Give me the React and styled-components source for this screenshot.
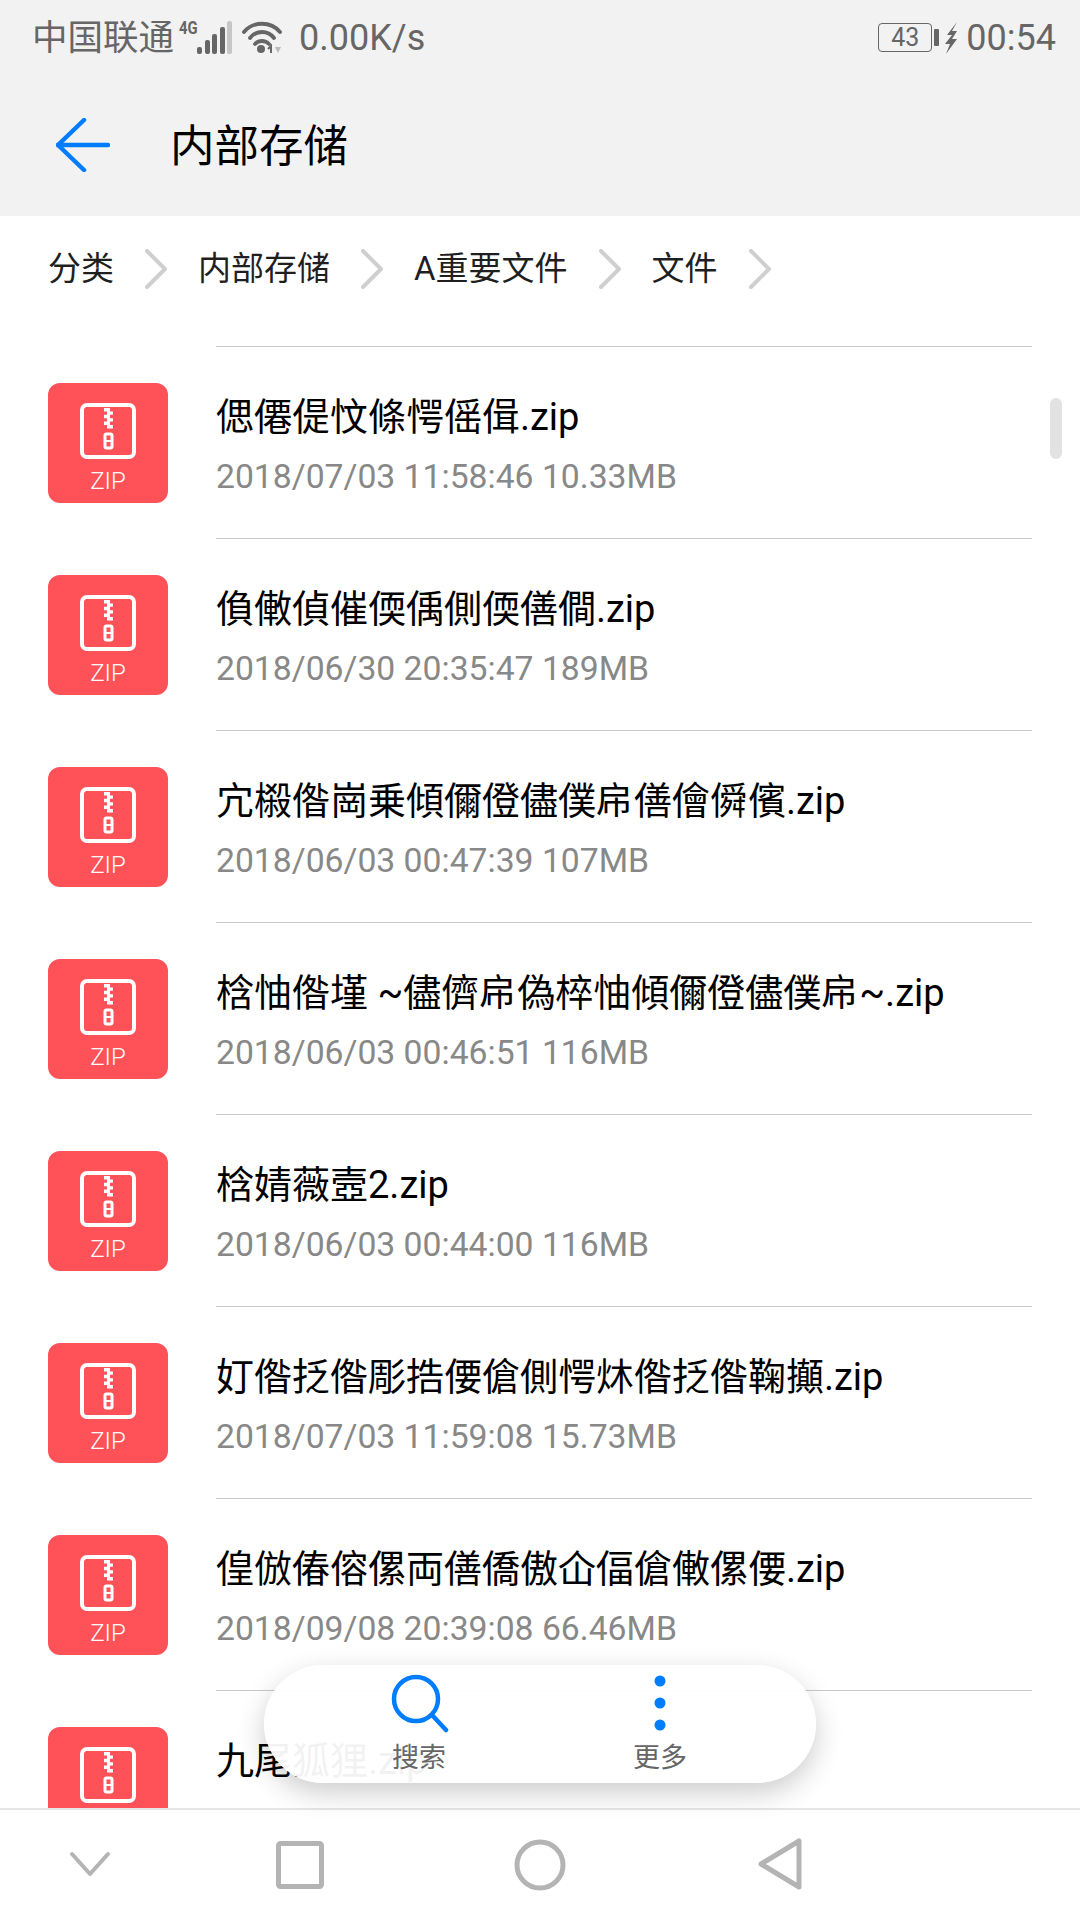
import styled, { createGlobalStyle } from 'styled-components';

const GlobalStyle = createGlobalStyle`
  html, body {
    margin: 0;
    padding: 0;
    background: #fff;
  }
  * {
    box-sizing: border-box;
  }
`;

const FONT = 'Roboto, "Noto Sans CJK SC", "Noto Sans CJK TC", sans-serif';

const Screen = styled.div`
  position: relative;
  display: flex;
  flex-direction: column;
  width: 1080px;
  height: 1920px;
  overflow: hidden;
  background: #fff;
  font-family: ${FONT};
`;

const Header = styled.header`
  flex: none;
  height: 216px;
  background: #f2f2f2;
`;

const StatusBar = styled.div`
  display: flex;
  align-items: center;
  justify-content: space-between;
  height: 74px;
  padding: 1px 24px 0 32px;
  color: #666;
`;

const StatusGroup = styled.div`
  display: flex;
  align-items: center;
`;

const Carrier = styled.span`
  font-size: 35.5px;
  line-height: 40px;
  margin-right: 5px;
`;

const NetType = styled.span`
  align-self: flex-start;
  width: 18px;
  margin-top: 1px;
  font-size: 19px;
  line-height: 18px;
  font-weight: 700;
  transform: scaleX(0.78);
  transform-origin: left center;
`;

const WifiSlot = styled.span`
  display: flex;
  margin-left: 10px;
`;

const Speed = styled.span`
  margin-left: 17px;
  font-size: 36px;
  line-height: 40px;
`;

const BatteryBox = styled.span`
  display: flex;
  align-items: center;
  justify-content: center;
  width: 54px;
  height: 29px;
  border: 1.5px solid #666;
  border-radius: 4px;
  font-size: 25px;
  line-height: 26px;
`;

const BatteryNub = styled.span`
  width: 5px;
  height: 17px;
  margin: 0 5px 0 2px;
  border-radius: 1px;
  background: #666;
`;

const Clock = styled.span`
  margin-left: 8px;
  font-size: 36px;
  line-height: 40px;
`;

const TitleBar = styled.div`
  display: flex;
  align-items: center;
  height: 142px;
  padding-left: 56px;
`;

const Title = styled.h1`
  margin: 4px 0 0 60px;
  font-size: 44.5px;
  line-height: 60px;
  font-weight: 400;
  color: #000;
`;

const Breadcrumbs = styled.nav`
  flex: none;
  display: flex;
  align-items: center;
  gap: 31px;
  height: 106px;
  padding-left: 48px;
`;

const Crumb = styled.span`
  font-size: 33px;
  line-height: 44px;
  color: #1f1f1f;
`;

const List = styled.div`
  flex: 1;
  min-height: 0;
  margin-top: 24px;
  overflow: hidden;
`;

const Row = styled.div`
  display: flex;
  height: 192px;
  padding: 0 48px;
`;

const FileIcon = styled.div`
  flex: none;
  display: flex;
  flex-direction: column;
  align-items: center;
  width: 120px;
  height: 120px;
  margin-top: 37px;
  padding-top: 20px;
  border-radius: 12px;
  background: #ff5258;
`;

const FileIconLabel = styled.span`
  margin-top: 8px;
  font-size: 24px;
  line-height: 28px;
  font-weight: 300;
  color: #fff;
`;

const RowBody = styled.div`
  flex: 1;
  margin-left: 48px;
  border-top: 1px solid #c9c9c9;
`;

const FileName = styled.div`
  margin-top: 44px;
  font-size: 38px;
  line-height: 52px;
  color: #000;
  white-space: nowrap;
`;

const FileMeta = styled.div`
  margin-top: 14px;
  font-size: 33.7px;
  line-height: 40px;
  color: #888;
  white-space: nowrap;
`;

const ScrollThumb = styled.div`
  position: absolute;
  top: 398px;
  left: 1050px;
  width: 12px;
  height: 61px;
  border-radius: 6px;
  background: #e2e2e2;
`;

const FloatingBar = styled.div`
  position: absolute;
  top: 1665px;
  left: 264px;
  display: grid;
  grid-template-columns: 244px 238px;
  width: 552px;
  height: 118px;
  padding: 8px 33px 0;
  border-radius: 59px;
  background: rgba(255, 255, 255, 0.95);
  box-shadow: 0 10px 28px rgba(0, 0, 0, 0.2);
`;

const BarAction = styled.div`
  display: flex;
  flex-direction: column;
  align-items: center;
`;

const BarLabel = styled.span`
  margin-top: 8px;
  font-size: 27px;
  line-height: 34px;
  color: #666;
`;

const NavBar = styled.div`
  flex: none;
  display: grid;
  grid-template-columns: 180px 240px 240px 240px 180px;
  height: 112px;
  border-top: 2px solid #e6e6e6;
  background: #fff;
`;

const NavSlot = styled.div`
  display: flex;
  align-items: center;
  justify-content: center;
`;

const files = [
  { name: '偲僊偍忟條愕傜偮.zip', meta: '2018/07/03 11:58:46 10.33MB' },
  { name: '偩僌偵催偄偊側偄僐僴.zip', meta: '2018/06/30 20:35:47 189MB' },
  { name: '宂榝偺崗乗傾儞僜儘僕帍僐儈僢儐.zip', meta: '2018/06/03 00:47:39 107MB' },
  { name: '梒怞偺墐 ~儘儕帍偽椊怞傾儞僜儘僕帍~.zip', meta: '2018/06/03 00:46:51 116MB' },
  { name: '梒婧薇壼2.zip', meta: '2018/06/03 00:44:00 116MB' },
  { name: '奵偺抸偺彫捁偠傖側愕炑偺抸偺鞠攧.zip', meta: '2018/07/03 11:59:08 15.73MB' },
  { name: '偟倣偆傛傫両僐僑傲仚偪傖僌傫偠.zip', meta: '2018/09/08 20:39:08 66.46MB' },
  { name: '九尾狐狸.zip', meta: '' },
];

function ZipGlyph() {
  return (
    <svg width="56" height="56" viewBox="0 0 56 56" fill="none" stroke="#fff">
      <rect x="2" y="2" width="52" height="52" rx="5" strokeWidth="4" />
      <path
        d="M24 5 h6 v3.4 h-6 z M27 8.4 h6 v3.4 h-6 z M24 11.8 h6 v3.4 h-6 z M27 15.2 h6 v3.4 h-6 z M24 18.6 h6 v3.4 h-6 z M27 22 h6 v3.4 h-6 z"
        fill="#fff"
        stroke="none"
      />
      <rect x="25" y="31" width="7" height="14" rx="1.5" strokeWidth="3" />
      <path d="M25 38 h7" strokeWidth="2" />
    </svg>
  );
}

function SignalIcon() {
  return (
    <svg width="35" height="34" viewBox="0 0 35 34" fill="#666">
      <rect x="0" y="26" width="5" height="7" rx="2" />
      <rect x="8" y="19" width="5" height="14" rx="2" />
      <rect x="15" y="13" width="5" height="20" rx="2" />
      <rect x="23" y="6" width="5" height="27" rx="2" />
      <rect x="30" y="0" width="5" height="33" rx="2" fill="#c6c6c6" />
    </svg>
  );
}

function WifiIcon() {
  return (
    <svg width="40" height="33" viewBox="0 0 40 33" fill="none" stroke="#666" strokeWidth="3.8" strokeLinecap="round">
      <path d="M2 11 C11 0 29 0 38 11" />
      <path d="M8 17 C14 9 26 9 32 17" />
      <path d="M13 23 C17 19 23 19 27 23" />
      <circle cx="19" cy="28" r="4" fill="#666" stroke="none" />
      <path d="M29 32 V25 l-3 3" strokeWidth="2" strokeLinecap="butt" />
      <path d="M33 26 h6 l-3 6 z" fill="#bbb" stroke="none" />
    </svg>
  );
}

function BoltIcon() {
  return (
    <svg width="14" height="32" viewBox="0 0 14 32" fill="#666">
      <path d="M13 0 L3 13 H8 L1 22 H6 L2 32 L13 17 H8 L13 9 H8 Z" />
    </svg>
  );
}

function BackArrow() {
  return (
    <svg width="54" height="54" viewBox="0 0 54 54" fill="none" stroke="#007dff" strokeWidth="4.5" strokeLinecap="round" strokeLinejoin="round">
      <path d="M28 2 L2 27 L28 52" />
      <path d="M2 27 H52" />
    </svg>
  );
}

function CrumbChevron() {
  return (
    <svg width="22" height="40" viewBox="0 0 22 40" fill="none" stroke="#cfcfcf" strokeWidth="4" strokeLinecap="round" strokeLinejoin="round">
      <path d="M2 2 L20 20 L2 38" />
    </svg>
  );
}

function SearchIcon() {
  return (
    <svg width="60" height="60" viewBox="0 0 60 60" fill="none" stroke="#007dff" strokeWidth="4.5" strokeLinecap="round">
      <circle cx="27" cy="26" r="22" />
      <path d="M43 42 L57 57" />
    </svg>
  );
}

function MoreIcon() {
  return (
    <svg width="60" height="60" viewBox="0 0 60 60" fill="#007dff">
      <circle cx="30" cy="8" r="5.5" />
      <circle cx="30" cy="30" r="5.5" />
      <circle cx="30" cy="52" r="5.5" />
    </svg>
  );
}

function NavIcon({ children }) {
  return (
    <svg width="60" height="60" viewBox="0 0 60 60" fill="none" stroke="#b4b4b4" strokeWidth="5" strokeLinejoin="round" strokeLinecap="round">
      {children}
    </svg>
  );
}

export default function App() {
  return (
    <Screen>
      <GlobalStyle />
      <Header>
        <StatusBar>
          <StatusGroup>
            <Carrier>中国联通</Carrier>
            <NetType>4G</NetType>
            <SignalIcon />
            <WifiSlot>
              <WifiIcon />
            </WifiSlot>
            <Speed>0.00K/s</Speed>
          </StatusGroup>
          <StatusGroup>
            <BatteryBox>43</BatteryBox>
            <BatteryNub />
            <BoltIcon />
            <Clock>00:54</Clock>
          </StatusGroup>
        </StatusBar>
        <TitleBar>
          <BackArrow />
          <Title>内部存储</Title>
        </TitleBar>
      </Header>
      <Breadcrumbs>
        <Crumb>分类</Crumb>
        <CrumbChevron />
        <Crumb>内部存储</Crumb>
        <CrumbChevron />
        <Crumb>A重要文件</Crumb>
        <CrumbChevron />
        <Crumb>文件</Crumb>
        <CrumbChevron />
      </Breadcrumbs>
      <List>
        {files.map((file) => (
          <Row key={file.name}>
            <FileIcon>
              <ZipGlyph />
              <FileIconLabel>ZIP</FileIconLabel>
            </FileIcon>
            <RowBody>
              <FileName>{file.name}</FileName>
              <FileMeta>{file.meta}</FileMeta>
            </RowBody>
          </Row>
        ))}
      </List>
      <NavBar>
        <NavSlot>
          <NavIcon><path d="M12 19 L30 39 L48 19" strokeWidth="4" /></NavIcon>
        </NavSlot>
        <NavSlot>
          <NavIcon><rect x="8.5" y="8.5" width="43" height="43" rx="2" /></NavIcon>
        </NavSlot>
        <NavSlot>
          <NavIcon><circle cx="30" cy="30" r="23" /></NavIcon>
        </NavSlot>
        <NavSlot>
          <NavIcon><path d="M49 6 V52 L11 29 Z" /></NavIcon>
        </NavSlot>
        <NavSlot />
      </NavBar>
      <ScrollThumb />
      <FloatingBar>
        <BarAction>
          <SearchIcon />
          <BarLabel>搜索</BarLabel>
        </BarAction>
        <BarAction>
          <MoreIcon />
          <BarLabel>更多</BarLabel>
        </BarAction>
      </FloatingBar>
    </Screen>
  );
}
